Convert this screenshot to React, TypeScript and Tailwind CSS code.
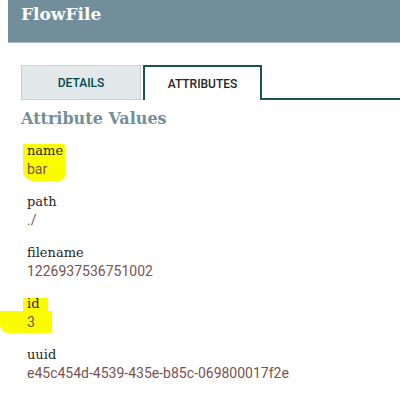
const attributes = [
  { name: "name", value: "bar", mark: "top" },
  { name: "path", value: "./" },
  { name: "filename", value: "1226937536751002" },
  { name: "id", value: "3", mark: "id" },
  { name: "uuid", value: "e45c454d-4539-435e-b85c-069800017f2e" },
];

const slab = { fontFamily: '"DejaVu Serif", "Liberation Serif", serif' };

function Highlight({ kind }: { kind?: string }) {
  if (kind === "top") {
    return (
      <div className="absolute left-[-4px] top-[3px] w-[42px] h-[37px] bg-[#fcfc00] rounded-tr-[2px] rounded-bl-[10px] rounded-br-[6px] -z-0" />
    );
  }
  if (kind === "id") {
    return (
      <>
        <div className="absolute left-[-4px] top-[4px] w-[25px] h-[16px] bg-[#fcfc00] -z-0" />
        <div className="absolute left-[-27px] top-[17px] w-[52px] h-[22px] bg-[#fcfc00] rounded-bl-[8px] rounded-br-[3px] -z-0" />
      </>
    );
  }
  return null;
}

export default function App() {
  return (
    <div className="w-[400px] h-[397px] bg-white overflow-hidden" style={{ fontFamily: "Roboto, sans-serif" }}>
      <header className="ml-2 h-[43px] bg-[#728e9b] border-b border-[#a9bac2] pl-[13px] pt-[2px]">
        <h1 className="text-white font-bold text-[17px] leading-[24px]" style={slab}>
          FlowFile
        </h1>
      </header>

      <nav className="flex items-end mt-[22px] pl-[21px]">
        <div className="w-[120px] h-[35px] bg-[#e3e8eb] border border-[#c7d0d5] flex items-center justify-center text-[12px] font-medium text-[#004849]">
          DETAILS
        </div>
        <div className="ml-[2px] w-[119px] h-[35px] border-t-2 border-l-2 border-r-2 border-[#1d5253] flex items-center justify-center text-[12px] font-medium text-[#262626]">
          ATTRIBUTES
        </div>
        <div className="flex-1 border-b-2 border-[#1d5253]" />
      </nav>

      <section className="pl-[21px] pt-[9px]">
        <h2 className="text-[#728e9b] font-bold text-[16px] leading-[20px]" style={slab}>
          Attribute Values
        </h2>
        <div className="pl-[6px] pt-[12px] flex flex-col gap-[13px]">
          {attributes.map((attr) => (
            <div key={attr.name} className="relative isolate">
              <Highlight kind={attr.mark} />
              <div className="relative text-[13px] leading-[19px] text-[#262626]" style={slab}>
                {attr.name}
              </div>
              <div className="relative text-[14px] leading-[19px] text-[#775351]">{attr.value}</div>
            </div>
          ))}
        </div>
      </section>
    </div>
  );
}
